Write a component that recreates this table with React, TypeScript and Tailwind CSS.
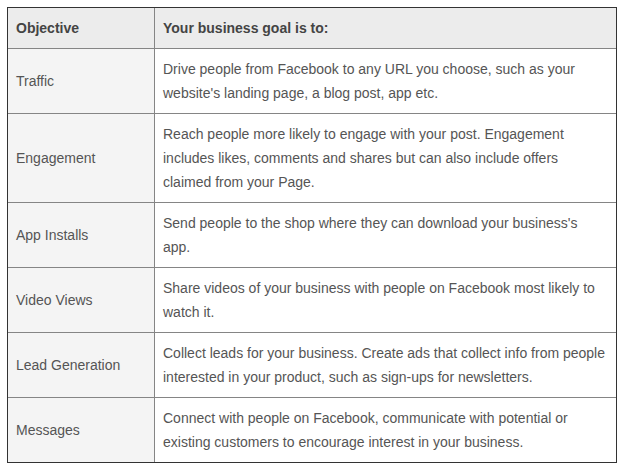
import React from "react";

const rows: [string, string][] = [
  ["Traffic", "Drive people from Facebook to any URL you choose, such as your website's landing page, a blog post, app etc."],
  ["Engagement", "Reach people more likely to engage with your post. Engagement includes likes, comments and shares but can also include offers claimed from your Page."],
  ["App Installs", "Send people to the shop where they can download your business's app."],
  ["Video Views", "Share videos of your business with people on Facebook most likely to watch it."],
  ["Lead Generation", "Collect leads for your business. Create ads that collect info from people interested in your product, such as sign-ups for newsletters."],
  ["Messages", "Connect with people on Facebook, communicate with potential or existing customers to encourage interest in your business."],
];

export default function App() {
  return (
    <div className="w-[624px] h-[469px] bg-white pt-[7px] pl-[7px]" style={{ fontFamily: '"Liberation Sans", Arial, sans-serif' }}>
      <div className="w-[610px] border border-[#333333] bg-[#858585] grid grid-cols-[146px_461px] gap-px text-[14px] leading-[24px]">
        <div className="bg-[#ececec] px-[8px] py-[8px] font-bold text-[#444444]">Objective</div>
        <div className="bg-[#ececec] px-[8px] py-[8px] font-bold text-[#444444]">Your business goal is to:</div>
        {rows.map(([a, b]) => (
          <React.Fragment key={a}>
            <div className="bg-[#f4f4f4] px-[8px] py-[8px] text-[#555555] flex items-center">{a}</div>
            <div className="bg-white px-[8px] py-[8px] text-[#555555]">{b}</div>
          </React.Fragment>
        ))}
      </div>
    </div>
  );
}
